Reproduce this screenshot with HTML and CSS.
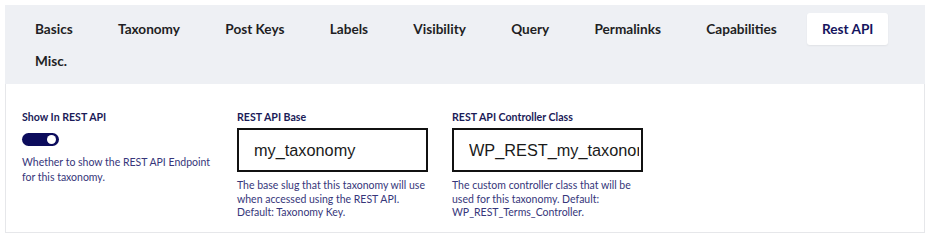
FILE: index.html
```html
<!DOCTYPE html>
<html>
<head>
<meta charset="utf-8">
<link rel="stylesheet" href="styles.css">
</head>
<body>
<div class="panel">
  <div class="tabs">
    <div class="tab">Basics</div>
    <div class="tab">Taxonomy</div>
    <div class="tab">Post Keys</div>
    <div class="tab">Labels</div>
    <div class="tab">Visibility</div>
    <div class="tab">Query</div>
    <div class="tab">Permalinks</div>
    <div class="tab">Capabilities</div>
    <div class="tab active">Rest API</div>
    <div class="tab">Misc.</div>
  </div>
  <div class="content">
    <div class="field">
      <div class="label">Show In REST API</div>
      <div class="toggle"><span class="knob"></span></div>
      <p class="help help-toggle">Whether to show the REST API Endpoint for this taxonomy.</p>
    </div>
    <div class="field">
      <div class="label">REST API Base</div>
      <input class="input" type="text" value="my_taxonomy">
      <p class="help">The base slug that this taxonomy will use when accessed using the REST API. Default: Taxonomy Key.</p>
    </div>
    <div class="field">
      <div class="label">REST API Controller Class</div>
      <input class="input" type="text" value="WP_REST_my_taxonomy_Controller">
      <p class="help">The custom controller class that will be used for this taxonomy. Default: WP_REST_Terms_Controller.</p>
    </div>
  </div>
</div>
</body>
</html>
```
FILE: styles.css
```css
html, body {
  margin: 0;
  padding: 0;
  background: #ffffff;
}
body {
  padding: 5px 5px 0 5px;
  font-family: Lato, "Noto Sans", sans-serif;
}
.panel {
  width: 920px;
}
.tabs {
  background: #eef0f4;
  display: flex;
  flex-wrap: wrap;
  column-gap: 15.3px;
  padding: 8px 15px 7px 15px;
}
.tab {
  height: 32px;
  line-height: 32px;
  padding: 0 15px;
  font-size: 13.6px;
  font-weight: 700;
  color: #1f1f24;
  border-radius: 3px;
}
.tab.active {
  background: #ffffff;
  color: #15155e;
  box-shadow: 0 1px 2px rgba(0, 0, 0, 0.06);
}
.content {
  border: 1px solid #e6e7ea;
  border-top: none;
  height: 149px;
  box-sizing: border-box;
  padding: 26px 16px 0 16px;
  display: flex;
  column-gap: 24px;
}
.field {
  width: 191px;
}
.label {
  font-size: 10.6px;
  font-weight: 700;
  color: #1b1b58;
  line-height: 14px;
}
.toggle {
  margin-top: 9px;
  width: 37px;
  height: 13px;
  border-radius: 7px;
  background: #0c0c5c;
  position: relative;
}
.knob {
  position: absolute;
  right: 3px;
  top: 2px;
  width: 9px;
  height: 9px;
  border-radius: 50%;
  background: #ffffff;
}
.input {
  display: block;
  margin: 4px 0 0 0;
  width: 191px;
  height: 44px;
  box-sizing: border-box;
  border: 2px solid #111111;
  border-radius: 0;
  padding: 0 2px 0 15px;
  font-family: "Liberation Sans", Arial, sans-serif;
  font-size: 16.3px;
  color: #1a1a1a;
  background: #ffffff;
  outline: none;
}
.help {
  margin: 7px 0 0 0;
  font-size: 10.5px;
  line-height: 13.5px;
  color: #36367a;
}
.help-toggle {
  margin-top: 9px;
  line-height: 15px;
}
```
